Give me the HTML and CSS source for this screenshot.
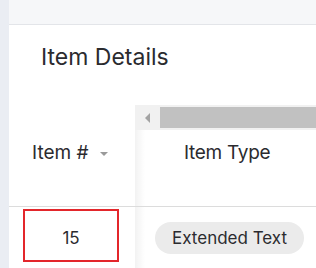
FILE: index.html
```html
<!DOCTYPE html>
<html lang="en">
<head>
    <meta charset="UTF-8">
    <meta name="viewport" content="width=device-width, initial-scale=1.0">
    <title>Item Details</title>
    <link rel="stylesheet" href="styles.css">
</head>
<body>
    <div class="rail"></div>
    <div class="main">
        <div class="topbar"></div>
        <h1 class="title">Item Details</h1>

        <div class="table">
            <!-- columna fija -->
            <div class="fixed-col">
                <div class="bar-space"></div>
                <div class="head-cell">
                    Item #
                    <span class="caret"></span>
                </div>
                <div class="body-cell">
                    <div class="num-box">15</div>
                </div>
            </div>

            <!-- columnas con scroll -->
            <div class="scroll-col">
                <div class="fake-scrollbar">
                    <div class="arrow-btn"><span class="arrow-left"></span></div>
                    <div class="thumb"></div>
                </div>
                <div class="head-cell type-head">Item Type</div>
                <div class="body-cell type-cell">
                    <span class="pill">Extended Text</span>
                </div>
            </div>
        </div>
    </div>
</body>
</html>
```

FILE: styles.css
```css
/* Estilos generales */
body {
    font-family: Inter, "Open Sans", sans-serif;
    margin: 0;
    padding: 0;
    display: flex;
    height: 100vh;
    overflow: hidden;
    background-color: #fff;
    color: #2b2b2f;
}

.rail {
    width: 9px;
    flex-shrink: 0;
    background-color: #eaedf3;
}

.main {
    flex: 1;
    display: flex;
    flex-direction: column;
    min-width: 0;
}

.topbar {
    height: 24px;
    flex-shrink: 0;
    background-color: #f6f7f9;
    border-bottom: 1px solid #e3e5e9;
}

.title {
    margin: 16px 0 0 32px;
    font-size: 23px;
    font-weight: 400;
    line-height: 32px;
}

/* Tabla */
.table {
    display: flex;
    margin-top: 32px;
}

.fixed-col {
    width: 126px;
    flex-shrink: 0;
}

.scroll-col {
    flex: 1;
    min-width: 0;
}

.bar-space {
    height: 25px;
}

.head-cell {
    height: 77px;
    display: flex;
    align-items: flex-start;
    padding-top: 11px;
    border-bottom: 1px solid #dcdcdc;
    font-size: 19px;
    line-height: 23px;
    box-sizing: border-box;
}

.fixed-col .head-cell {
    padding-left: 23px;
}

.caret {
    width: 0;
    height: 0;
    margin-left: 11px;
    margin-top: 11px;
    border-left: 4px solid transparent;
    border-right: 4px solid transparent;
    border-top: 4px solid #9a9a9a;
}

.body-cell {
    height: 61px;
    font-size: 17px;
}

.num-box {
    margin: 2px 0 0 14px;
    width: 96px;
    height: 53px;
    box-sizing: border-box;
    border: 2px solid #e3262b;
    display: flex;
    align-items: center;
    justify-content: center;
    padding-top: 4px;
}

/* Scroll falso */
.fake-scrollbar {
    height: 25px;
    display: flex;
    background-color: #f1f1f1;
}

.arrow-btn {
    width: 25px;
    display: flex;
    align-items: center;
    justify-content: center;
}

.arrow-left {
    width: 0;
    height: 0;
    border-top: 5px solid transparent;
    border-bottom: 5px solid transparent;
    border-right: 5px solid #a3a3a3;
}

.thumb {
    flex: 1;
    margin: 2px 0;
    background-color: #c1c1c1;
}

.type-head,
.type-cell {
    background: linear-gradient(to right, rgba(0, 0, 0, 0.05), rgba(0, 0, 0, 0) 10px);
}

.type-head {
    padding-left: 49px;
    letter-spacing: -0.3px;
}

.type-cell {
    padding: 15px 0 0 20px;
    box-sizing: border-box;
}

.pill {
    display: inline-flex;
    align-items: center;
    height: 32px;
    padding: 0 17px;
    border-radius: 16px;
    background-color: #ebebeb;
    white-space: nowrap;
}
```
